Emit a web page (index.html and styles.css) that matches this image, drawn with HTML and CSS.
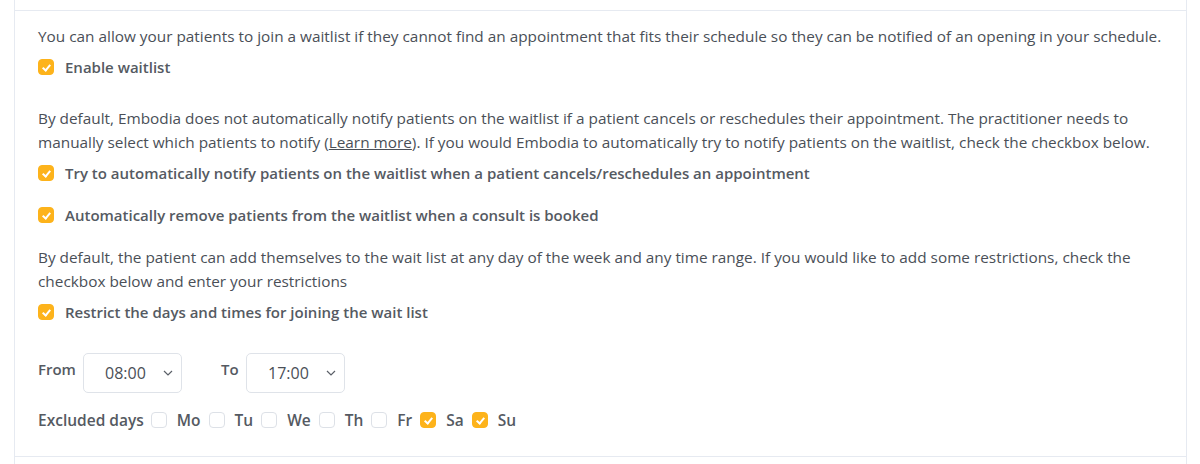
FILE: index.html
```html
<!DOCTYPE html>
<html lang="en">
<head>
    <meta charset="UTF-8">
    <meta name="viewport" content="width=device-width, initial-scale=1.0">
    <title>Waitlist settings</title>
    <link rel="stylesheet" href="styles.css">
</head>
<body>
    <div class="panel">
        <div class="panel-top"></div>
        <div class="panel-body">
            <p class="text">You can allow your patients to join a waitlist if they cannot find an appointment that fits their schedule so they can be notified of an opening in your schedule.</p>
            <label class="check-row first">
                <span class="box checked"></span>
                <span>Enable waitlist</span>
            </label>

            <p class="text gap-lg">By default, Embodia does not automatically notify patients on the waitlist if a patient cancels or reschedules their appointment. The practitioner needs to manually select which patients to notify (<a href="#">Learn more</a>). If you would Embodia to automatically try to notify patients on the waitlist, check the checkbox below.</p>
            <label class="check-row">
                <span class="box checked"></span>
                <span>Try to automatically notify patients on the waitlist when a patient cancels/reschedules an appointment</span>
            </label>
            <label class="check-row spaced">
                <span class="box checked"></span>
                <span>Automatically remove patients from the waitlist when a consult is booked</span>
            </label>

            <p class="text gap-md">By default, the patient can add themselves to the wait list at any day of the week and any time range. If you would like to add some restrictions, check the checkbox below and enter your restrictions</p>
            <label class="check-row">
                <span class="box checked"></span>
                <span>Restrict the days and times for joining the wait list</span>
            </label>

            <div class="time-row">
                <span class="field-label">From</span>
                <div class="select">
                    <span>08:00</span>
                    <svg width="10" height="6" viewBox="0 0 10 6"><path d="M1 1l4 4 4-4" fill="none" stroke="#5b6068" stroke-width="1.2"/></svg>
                </div>
                <span class="field-label to">To</span>
                <div class="select">
                    <span>17:00</span>
                    <svg width="10" height="6" viewBox="0 0 10 6"><path d="M1 1l4 4 4-4" fill="none" stroke="#5b6068" stroke-width="1.2"/></svg>
                </div>
            </div>

            <div class="days-row">
                <span class="days-label">Excluded days</span>
                <span class="box"></span><span class="day">Mo</span>
                <span class="box"></span><span class="day">Tu</span>
                <span class="box"></span><span class="day">We</span>
                <span class="box"></span><span class="day">Th</span>
                <span class="box"></span><span class="day">Fr</span>
                <span class="box checked"></span><span class="day">Sa</span>
                <span class="box checked"></span><span class="day">Su</span>
            </div>
        </div>
    </div>
</body>
</html>
```

FILE: styles.css
```css
body {
    margin: 0;
    background: #fff;
    font-family: "Open Sans", Arial, sans-serif;
    font-size: 15.35px;
    color: #4a4f57;
}
.panel {
    margin: 0 13px 0 14px;
    border-left: 1px solid #e6eaf1;
    border-right: 1px solid #e6eaf1;
    height: 464px;
}
.panel-top {
    height: 10px;
    border-bottom: 1px solid #e6eaf1;
}
.panel-body {
    padding: 13px 23px 24px;
    border-bottom: 1px solid #e6eaf1;
}
.text {
    margin: 0;
    line-height: 24.5px;
}
.text a {
    color: inherit;
    text-decoration: underline;
}
.gap-lg {
    margin-top: 27px;
}
.gap-md {
    margin-top: 18px;
}
.check-row {
    display: flex;
    align-items: center;
    gap: 11px;
    height: 24px;
    margin-top: 6px;
    font-size: 15px;
    font-weight: 600;
    color: #555a62;
}
.check-row.spaced {
    margin-top: 18px;
}
.box {
    width: 16px;
    height: 16px;
    box-sizing: border-box;
    border: 1px solid #dde1e7;
    border-radius: 4px;
    background: #fff;
    flex: none;
    position: relative;
}
.box.checked {
    background: #fdb31b;
    border-color: #fdb31b;
}
.box.checked::after {
    content: "";
    position: absolute;
    left: 5px;
    top: 3px;
    width: 3px;
    height: 6px;
    border: solid #fff;
    border-width: 0 2px 2px 0;
    transform: rotate(40deg);
}
.time-row {
    display: flex;
    align-items: center;
    margin-top: 29px;
}
.field-label {
    font-size: 15px;
    font-weight: 600;
    color: #555a62;
    margin-top: -8px;
    width: 45px;
}
.field-label.to {
    margin-left: 39px;
    width: 25px;
}
.select {
    width: 99px;
    height: 40px;
    box-sizing: border-box;
    border: 1px solid #dfe3e9;
    border-radius: 5px;
    display: flex;
    align-items: center;
    justify-content: space-between;
    padding: 0 8px 0 21px;
    font-size: 16px;
}
.days-row {
    display: flex;
    align-items: center;
    margin-top: 15px;
    height: 24px;
    font-size: 15.5px;
    font-weight: 600;
    color: #555a62;
}
.days-label {
    margin-right: 7px;
}
.day {
    margin: 0 8px 0 10px;
}
```
